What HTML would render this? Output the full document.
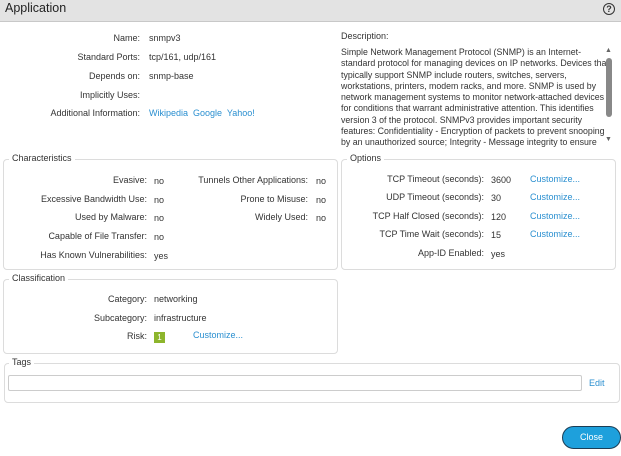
<!DOCTYPE html>
<html><head><style>
*{margin:0;padding:0;box-sizing:border-box}
body{width:621px;height:456px;background:#fff;font-family:"Liberation Sans",sans-serif;font-size:9px;color:#333;position:relative;overflow:hidden}
.a{position:absolute;white-space:nowrap}
.hdr{position:absolute;left:0;top:0;width:621px;height:22px;background:#e3e3e3;border-bottom:1px solid #c8c8c8}
.lbl{position:absolute;text-align:right;color:#333;white-space:nowrap}
.lk{color:#2a8fd0}
fieldset{position:absolute;border:1px solid #dcdcdc;border-radius:4px}
.leg{position:absolute;background:#fff;padding:0 3px;color:#333;font-size:9px}
</style></head><body>
<div class="hdr"></div>
<div class="a" style="left:5px;top:1px;font-size:12.5px;color:#222">Application</div>
<div class="a" style="left:603px;top:3px;width:12px;height:12px;border:1px solid #333;border-radius:50%;font-size:9px;text-align:center;line-height:10px;font-weight:bold">?</div>

<div class="lbl" style="right:481px;top:33px">Name:</div><div class="a" style="left:149px;top:33px">snmpv3</div>
<div class="lbl" style="right:481px;top:52px">Standard Ports:</div><div class="a" style="left:149px;top:52px">tcp/161, udp/161</div>
<div class="lbl" style="right:481px;top:71px">Depends on:</div><div class="a" style="left:149px;top:71px">snmp-base</div>
<div class="lbl" style="right:481px;top:90px">Implicitly Uses:</div>
<div class="lbl" style="right:481px;top:108px">Additional Information:</div><div class="a lk" style="left:149px;top:108px">Wikipedia&nbsp; Google&nbsp; Yahoo!</div>

<div class="a" style="left:341px;top:31px;color:#333">Description:</div>
<div class="a" style="left:341px;top:47px;line-height:11.3px;font-size:8.8px">Simple Network Management Protocol (SNMP) is an Internet-<br>standard protocol for managing devices on IP networks. Devices that<br>typically support SNMP include routers, switches, servers,<br>workstations, printers, modem racks, and more. SNMP is used by<br>network management systems to monitor network-attached devices<br>for conditions that warrant administrative attention. This identifies<br>version 3 of the protocol. SNMPv3 provides important security<br>features: Confidentiality - Encryption of packets to prevent snooping<br>by an unauthorized source; Integrity - Message integrity to ensure</div>
<div class="a" style="left:605px;top:47px;font-size:7px;color:#666">▲</div>
<div class="a" style="left:606px;top:58px;width:6px;height:59px;background:#888;border-radius:3px"></div>
<div class="a" style="left:605px;top:136px;font-size:7px;color:#666">▼</div>

<fieldset style="left:3px;top:159px;width:335px;height:111px"></fieldset>
<div class="leg" style="left:9px;top:153px">Characteristics</div>
<div class="lbl" style="right:474px;top:175px">Evasive:</div><div class="a" style="left:154px;top:176px">no</div>
<div class="lbl" style="right:474px;top:194px">Excessive Bandwidth Use:</div><div class="a" style="left:154px;top:195px">no</div>
<div class="lbl" style="right:474px;top:212px">Used by Malware:</div><div class="a" style="left:154px;top:213px">no</div>
<div class="lbl" style="right:474px;top:231px">Capable of File Transfer:</div><div class="a" style="left:154px;top:232px">no</div>
<div class="lbl" style="right:474px;top:250px">Has Known Vulnerabilities:</div><div class="a" style="left:154px;top:251px">yes</div>
<div class="lbl" style="right:313px;top:175px">Tunnels Other Applications:</div><div class="a" style="left:316px;top:176px">no</div>
<div class="lbl" style="right:313px;top:194px">Prone to Misuse:</div><div class="a" style="left:316px;top:195px">no</div>
<div class="lbl" style="right:313px;top:212px">Widely Used:</div><div class="a" style="left:316px;top:213px">no</div>

<fieldset style="left:341px;top:159px;width:275px;height:111px"></fieldset>
<div class="leg" style="left:347px;top:153px">Options</div>
<div class="lbl" style="right:137px;top:174px">TCP Timeout (seconds):</div><div class="a" style="left:491px;top:175px">3600</div><div class="a lk" style="left:530px;top:174px">Customize...</div>
<div class="lbl" style="right:137px;top:192px">UDP Timeout (seconds):</div><div class="a" style="left:491px;top:193px">30</div><div class="a lk" style="left:530px;top:192px">Customize...</div>
<div class="lbl" style="right:137px;top:211px">TCP Half Closed (seconds):</div><div class="a" style="left:491px;top:212px">120</div><div class="a lk" style="left:530px;top:211px">Customize...</div>
<div class="lbl" style="right:137px;top:229px">TCP Time Wait (seconds):</div><div class="a" style="left:491px;top:230px">15</div><div class="a lk" style="left:530px;top:229px">Customize...</div>
<div class="lbl" style="right:137px;top:248px">App-ID Enabled:</div><div class="a" style="left:491px;top:249px">yes</div>

<fieldset style="left:3px;top:279px;width:335px;height:75px"></fieldset>
<div class="leg" style="left:9px;top:273px">Classification</div>
<div class="lbl" style="right:474px;top:294px">Category:</div><div class="a" style="left:154px;top:294px">networking</div>
<div class="lbl" style="right:474px;top:313px">Subcategory:</div><div class="a" style="left:154px;top:313px">infrastructure</div>
<div class="lbl" style="right:474px;top:331px">Risk:</div>
<div class="a" style="left:154px;top:332px;width:11px;height:11px;background:#8db52c;color:#fff;font-size:8px;text-align:center;line-height:11px">1</div>
<div class="a lk" style="left:193px;top:330px">Customize...</div>

<fieldset style="left:4px;top:363px;width:616px;height:40px"></fieldset>
<div class="leg" style="left:9px;top:357px">Tags</div>
<div class="a" style="left:8px;top:375px;width:574px;height:16px;border:1px solid #ccc;border-radius:2px"></div>
<div class="a lk" style="left:589px;top:378px">Edit</div>

<div class="a" style="left:562px;top:426px;width:59px;height:23px;background:#1ea0dc;border:1.5px solid #1b3d55;border-radius:12px;color:#fff;text-align:center;line-height:20px;font-size:9px">Close</div>
</body></html>
